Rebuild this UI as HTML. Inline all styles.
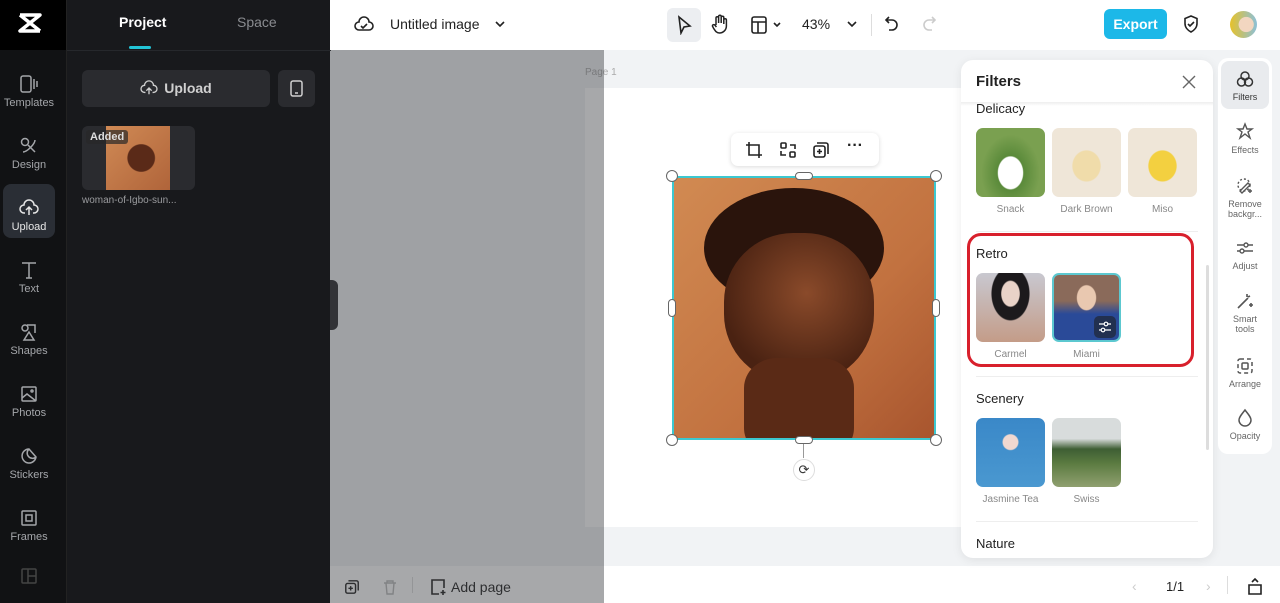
<!DOCTYPE html>
<html><head><meta charset="utf-8"><style>
*{box-sizing:border-box;margin:0;padding:0}
body{width:1280px;height:603px;overflow:hidden;font-family:"Liberation Sans",sans-serif;background:#f1f3f5;position:relative}
.abs{position:absolute}
.rail{left:0;top:0;width:66px;height:603px;background:#111214}
.rail .it{position:absolute;left:0;width:58px;text-align:center;color:#a4a6aa;font-size:11px}
.rail svg{display:block;margin:0 auto 3px}
.panel{left:66px;top:0;width:264px;height:603px;background:#18191c;border-left:1px solid #222}
.top{left:330px;top:0;width:950px;height:50px;background:#fff}
.bot{left:330px;top:566px;width:950px;height:37px;background:#fff}
.cap{text-align:center;font-size:10px;color:#888;margin-top:3px}
.th{position:absolute;width:69px;height:69px;border-radius:7px}
.sb .it{position:absolute;left:0;width:48px;text-align:center;font-size:9px;color:#666;line-height:10px}
.sb svg{display:block;margin:0 auto 3px}
</style></head><body>
<!-- left rail -->
<div class="abs rail">
 <div style="position:absolute;left:0;top:0;width:66px;height:50px;background:#000"></div>
 <svg class="abs" style="left:17px;top:11px" width="26" height="24" viewBox="0 0 26 24"><path d="M3 4h20L3 20h20M3 4l20 16" stroke="#fff" stroke-width="3.5" fill="none" stroke-linejoin="round"/></svg>
 <div class="it" style="top:74px"><svg width="20" height="20" viewBox="0 0 20 20" fill="none" stroke="#a4a6aa" stroke-width="1.5"><rect x="2" y="2" width="10" height="16" rx="2"/><path d="M15 5v10M18 7v6"/></svg>Templates</div>
 <div class="it" style="top:136px"><svg width="20" height="20" viewBox="0 0 20 20" fill="none" stroke="#a4a6aa" stroke-width="1.5"><circle cx="6" cy="6" r="3.5"/><path d="M9 9l7 7M4 16c4 0 12-8 12-12"/></svg>Design</div>
 <div style="position:absolute;left:3px;top:184px;width:52px;height:54px;background:#2a2e35;border-radius:8px"></div>
 <div class="it" style="top:198px;color:#e6e6e6"><svg width="20" height="20" viewBox="0 0 20 20" fill="none" stroke="#e6e6e6" stroke-width="1.5"><path d="M6 15H5a4 4 0 0 1 0-8 5 5 0 0 1 10 0 4 4 0 0 1 0 8h-1M10 17v-7M7 12l3-3 3 3"/></svg>Upload</div>
 <div class="it" style="top:260px"><svg width="20" height="20" viewBox="0 0 20 20" fill="none" stroke="#a4a6aa" stroke-width="1.5"><path d="M3 3h14M10 3v15M7 18h6"/></svg>Text</div>
 <div class="it" style="top:322px"><svg width="20" height="20" viewBox="0 0 20 20" fill="none" stroke="#a4a6aa" stroke-width="1.5"><path d="M8 3h8v8M10 10l-5 8h10z"/><circle cx="6" cy="6" r="3"/></svg>Shapes</div>
 <div class="it" style="top:384px"><svg width="20" height="20" viewBox="0 0 20 20" fill="none" stroke="#a4a6aa" stroke-width="1.5"><rect x="3" y="3" width="14" height="14" rx="1"/><path d="M3 14l5-4 9 7"/><circle cx="13" cy="7" r="1"/></svg>Photos</div>
 <div class="it" style="top:446px"><svg width="20" height="20" viewBox="0 0 20 20" fill="none" stroke="#a4a6aa" stroke-width="1.5"><path d="M17 11a7 7 0 1 1-7-8l7 8zM10 3a5 5 0 0 0 7 8"/></svg>Stickers</div>
 <div class="it" style="top:508px"><svg width="20" height="20" viewBox="0 0 20 20" fill="none" stroke="#a4a6aa" stroke-width="1.5"><rect x="3" y="3" width="14" height="14" rx="1"/><rect x="7" y="7" width="6" height="6"/></svg>Frames</div>
 <div class="it" style="top:566px"><svg width="20" height="20" viewBox="0 0 20 20" fill="none" stroke="#444" stroke-width="1.5"><rect x="3" y="3" width="14" height="14" rx="1"/><path d="M9 3v14M9 10h8"/></svg></div>
</div>
<!-- panel -->
<div class="abs panel">
 <div class="abs" style="left:52px;top:14px;color:#fff;font-weight:bold;font-size:14px">Project</div>
 <div class="abs" style="left:62px;top:46px;width:22px;height:3px;background:#22c4d6;border-radius:2px"></div>
 <div class="abs" style="left:170px;top:14px;color:#8a8c90;font-size:14px">Space</div>
 <div class="abs" style="left:0;top:50px;width:264px;height:1px;background:#26282c"></div>
 <div class="abs" style="left:15px;top:70px;width:188px;height:37px;background:#2a2b2f;border-radius:6px;color:#d0d0d0;font-weight:bold;font-size:14px;line-height:37px;text-align:center">
  <svg width="18" height="16" viewBox="0 0 20 18" style="vertical-align:-3px;margin-right:6px" fill="none" stroke="#d0d0d0" stroke-width="1.5"><path d="M6 14H5a4 4 0 0 1 0-8 5 5 0 0 1 10 0 4 4 0 0 1 0 8h-1M10 16v-6M7 12l3-3 3 3"/></svg>Upload</div>
 <div class="abs" style="left:211px;top:70px;width:37px;height:37px;background:#2a2b2f;border-radius:6px"><svg style="margin:10px 12px" width="13" height="17" viewBox="0 0 13 17" fill="none" stroke="#d0d0d0" stroke-width="1.5"><rect x="1" y="1" width="11" height="15" rx="2"/><path d="M5 13h3"/></svg></div>
 <div class="abs" style="left:15px;top:126px;width:113px;height:64px;background:#2a2b2f;border-radius:6px;overflow:hidden">
  <div class="abs" style="left:24px;top:0;width:64px;height:64px;background:radial-gradient(circle at 55% 50%,#5a2a18 0 28%,transparent 30%),linear-gradient(135deg,#d08a55,#b0643a)"></div>
  <div class="abs" style="left:4px;top:4px;padding:1px 4px;background:rgba(40,40,40,.7);color:#ddd;font-size:11px;font-weight:bold;border-radius:3px">Added</div>
 </div>
 <div class="abs" style="left:15px;top:195px;color:#9a9b9e;font-size:10px">woman-of-Igbo-sun...</div>
 <div class="abs" style="left:263px;top:280px;width:8px;height:50px;background:#2a2b2f;border-radius:0 6px 6px 0"></div>
</div>
<!-- top bar -->
<div class="abs top">
 <svg class="abs" style="left:24px;top:15px" width="20" height="18" viewBox="0 0 20 18" fill="none" stroke="#222" stroke-width="1.6"><path d="M5 15a4 4 0 0 1 0-8 5 5 0 0 1 10 0 4 4 0 0 1 0 8zM7 11l2 2 4-4"/></svg>
 <div class="abs" style="left:60px;top:16px;font-size:14px;color:#222">Untitled image</div>
 <svg class="abs" style="left:165px;top:20px" width="10" height="8" viewBox="0 0 10 8" fill="none" stroke="#222" stroke-width="1.6"><path d="M1 2l4 4 4-4"/></svg>
 <div class="abs" style="left:337px;top:8px;width:34px;height:34px;background:#eceef1;border-radius:6px"></div>
 <svg class="abs" style="left:346px;top:15px" width="16" height="20" viewBox="0 0 16 20" fill="none" stroke="#222" stroke-width="1.6"><path d="M3 2l11 9-6 1-3 6z"/></svg>
 <svg class="abs" style="left:381px;top:14px" width="18" height="20" viewBox="0 0 18 20" fill="none" stroke="#222" stroke-width="1.5"><path d="M5 11V4a1.3 1.3 0 0 1 2.6 0v5M7.6 9V2.5a1.3 1.3 0 0 1 2.6 0V9M10.2 9V3.5a1.3 1.3 0 0 1 2.6 0V10M12.8 10V6a1.3 1.3 0 0 1 2.6 0v6a7 7 0 0 1-7 7c-3 0-4-2-6-5l-1-2c0-1 1-2 2.5-1l1.5 2"/></svg>
 <svg class="abs" style="left:420px;top:15px" width="34" height="20" viewBox="0 0 34 20" fill="none" stroke="#222" stroke-width="1.6"><rect x="2" y="2" width="14" height="16" rx="2"/><path d="M2 7h14M8 7v11M24 8l3 3 3-3"/></svg>
 <div class="abs" style="left:472px;top:16px;font-size:14px;color:#222">43%</div>
 <svg class="abs" style="left:517px;top:20px" width="10" height="8" viewBox="0 0 10 8" fill="none" stroke="#222" stroke-width="1.6"><path d="M1 2l4 4 4-4"/></svg>
 <div class="abs" style="left:541px;top:14px;width:1px;height:22px;background:#ddd"></div>
 <svg class="abs" style="left:554px;top:15px" width="16" height="18" viewBox="0 0 16 18" fill="none" stroke="#222" stroke-width="1.6"><path d="M5 2L2 5l3 3M2 5h6a5 5 0 0 1 0 10H5"/></svg>
 <svg class="abs" style="left:591px;top:15px" width="16" height="18" viewBox="0 0 16 18" fill="none" stroke="#ccc" stroke-width="1.6"><path d="M11 2l3 3-3 3M14 5H8a5 5 0 0 0 0 10h3"/></svg>
 <div class="abs" style="left:774px;top:9px;width:63px;height:30px;background:#1cb8e8;border-radius:6px;color:#fff;font-weight:bold;font-size:14px;line-height:30px;text-align:center">Export</div>
 <svg class="abs" style="left:852px;top:14px" width="18" height="20" viewBox="0 0 18 20" fill="none" stroke="#222" stroke-width="1.6"><path d="M9 2l6 2.5v5c0 4-3 7-6 8.5-3-1.5-6-4.5-6-8.5v-5zM6 10l2 2 4-4"/></svg>
 <div class="abs" style="left:900px;top:11px;width:27px;height:27px;border-radius:50%;background:radial-gradient(circle at 60% 50%,#f2d6c0 0 35%,transparent 37%),linear-gradient(90deg,#e6c12a,#8cc0d8)"></div>
</div>
<!-- canvas -->
<div class="abs" style="left:585px;top:67px;font-size:10px;color:#aaa">Page 1</div>
<div class="abs" style="left:585px;top:88px;width:410px;height:439px;background:#fff"></div>
<div class="abs" style="left:731px;top:133px;width:148px;height:33px;background:#fff;border-radius:7px;box-shadow:0 1px 5px rgba(0,0,0,.15)">
 <svg class="abs" style="left:14px;top:8px" width="18" height="18" viewBox="0 0 18 18" fill="none" stroke="#222" stroke-width="1.6"><path d="M4 1v13h13M1 4h13v13"/></svg>
 <svg class="abs" style="left:48px;top:8px" width="18" height="18" viewBox="0 0 18 18" fill="none" stroke="#222" stroke-width="1.6"><rect x="2" y="2" width="5" height="5" rx="1"/><rect x="11" y="11" width="5" height="5" rx="1"/><path d="M11 4h5v4M7 14H2v-4"/></svg>
 <svg class="abs" style="left:81px;top:8px" width="18" height="18" viewBox="0 0 18 18" fill="none" stroke="#222" stroke-width="1.6"><rect x="2" y="5" width="11" height="11" rx="2"/><path d="M5 2h9a2 2 0 0 1 2 2v9M7.5 8v5M5 10.5h5"/></svg>
 <div class="abs" style="left:116px;top:4px;font-size:16px;font-weight:bold;color:#222">···</div>
</div>
<div class="abs" style="left:672px;top:176px;width:264px;height:264px;border:2px solid #3cc8d0;overflow:hidden;background:linear-gradient(135deg,#d18a52,#c27240 60%,#a8552e)">
 <div class="abs" style="left:30px;top:10px;width:180px;height:120px;border-radius:50%;background:#2a140c"></div>
 <div class="abs" style="left:50px;top:55px;width:150px;height:150px;border-radius:46%;background:radial-gradient(circle at 55% 40%,#8a4a2a,#4a2212 70%)"></div>
 <div class="abs" style="left:70px;top:180px;width:110px;height:100px;background:#5a2a16;border-radius:30%"></div>
</div>
<div class="abs" style="left:666px;top:170px;width:12px;height:12px;border-radius:50%;background:#fff;border:1px solid #666"></div>
<div class="abs" style="left:930px;top:170px;width:12px;height:12px;border-radius:50%;background:#fff;border:1px solid #666"></div>
<div class="abs" style="left:666px;top:434px;width:12px;height:12px;border-radius:50%;background:#fff;border:1px solid #666"></div>
<div class="abs" style="left:930px;top:434px;width:12px;height:12px;border-radius:50%;background:#fff;border:1px solid #666"></div>
<div class="abs" style="left:795px;top:172px;width:18px;height:8px;border-radius:4px;background:#fff;border:1px solid #666"></div>
<div class="abs" style="left:795px;top:436px;width:18px;height:8px;border-radius:4px;background:#fff;border:1px solid #666"></div>
<div class="abs" style="left:668px;top:299px;width:8px;height:18px;border-radius:4px;background:#fff;border:1px solid #666"></div>
<div class="abs" style="left:932px;top:299px;width:8px;height:18px;border-radius:4px;background:#fff;border:1px solid #666"></div>
<div class="abs" style="left:803px;top:444px;width:1px;height:14px;background:#999"></div>
<div class="abs" style="left:793px;top:459px;width:22px;height:22px;border-radius:50%;background:#fff;border:1px solid #ddd;text-align:center;font-size:13px;line-height:20px;color:#333">⟳</div>
<!-- bottom -->
<div class="abs bot">
 <svg class="abs" style="left:14px;top:13px" width="16" height="16" viewBox="0 0 18 18" fill="none" stroke="#222" stroke-width="1.6"><rect x="2" y="5" width="11" height="11" rx="2"/><path d="M5 2h9a2 2 0 0 1 2 2v9M7.5 8v5M5 10.5h5"/></svg>
 <svg class="abs" style="left:52px;top:13px" width="16" height="16" viewBox="0 0 16 16" fill="none" stroke="#bbb" stroke-width="1.4"><path d="M2 4h12M5 4V2h6v2M4 4l1 11h6l1-11"/></svg>
 <div class="abs" style="left:82px;top:11px;width:1px;height:16px;background:#ddd"></div>
 <svg class="abs" style="left:99px;top:12px" width="18" height="18" viewBox="0 0 18 18" fill="none" stroke="#222" stroke-width="1.6"><path d="M10 16H3V2h12v8M14 12v5M11.5 14.5h5"/></svg>
 <div class="abs" style="left:121px;top:13px;font-size:14px;color:#222">Add page</div>
 <div class="abs" style="left:802px;top:12px;font-size:14px;color:#ccc">‹</div>
 <div class="abs" style="left:836px;top:13px;font-size:13px;color:#222">1/1</div>
 <div class="abs" style="left:876px;top:12px;font-size:14px;color:#ccc">›</div>
 <div class="abs" style="left:897px;top:10px;width:1px;height:18px;background:#ddd"></div>
 <svg class="abs" style="left:917px;top:11px" width="16" height="18" viewBox="0 0 16 18" fill="none" stroke="#222" stroke-width="1.6"><path d="M2 8h12v9H2zM5 5l3-3 3 3"/></svg>
</div>
<!-- overlay -->
<div class="abs" style="left:330px;top:50px;width:274px;height:553px;background:rgba(60,62,66,.45)"></div>
<!-- filters panel -->
<div class="abs" style="left:961px;top:60px;width:252px;height:498px;background:#fff;border-radius:12px;box-shadow:0 2px 10px rgba(0,0,0,.08);overflow:hidden">
 <div class="abs" style="left:15px;top:13px;font-weight:bold;font-size:15px;color:#222">Filters</div>
 <svg class="abs" style="left:221px;top:15px" width="14" height="14" viewBox="0 0 14 14" stroke="#666" stroke-width="1.4"><path d="M1 1l12 12M13 1L1 13"/></svg>
 <div class="abs" style="left:0;top:42px;width:252px;height:4px;background:linear-gradient(#eee,#fff)"></div>
 <div class="abs" style="left:15px;top:41px;font-size:13px;color:#222">Delicacy</div>
 <div class="th" style="left:15px;top:68px;background:radial-gradient(ellipse at 50% 65%,#fff 0 25%,#5a8a3a 27%,#7aa050 60%),linear-gradient(#eee,#ddd)"></div>
 <div class="th" style="left:91px;top:68px;background:radial-gradient(ellipse at 50% 55%,#f0dcaa 0 28%,#efe6d8 30%),#e8ddd0"></div>
 <div class="th" style="left:167px;top:68px;background:radial-gradient(ellipse at 50% 55%,#f3d040 0 28%,#efe6d8 30%),#e9dccb"></div>
 <div class="abs cap" style="left:15px;top:141px;width:69px">Snack</div>
 <div class="abs cap" style="left:91px;top:141px;width:69px">Dark Brown</div>
 <div class="abs cap" style="left:167px;top:141px;width:69px">Miso</div>
 <div class="abs" style="left:15px;top:171px;width:222px;height:1px;background:#eee"></div>
 <div class="abs" style="left:15px;top:186px;font-size:13px;color:#222">Retro</div>
 <div class="th" style="left:15px;top:213px;background:radial-gradient(ellipse at 50% 30%,#e9d3c8 0 18%,#1c1a1c 20% 38%,transparent 40%),linear-gradient(#c8c8d0,#c49c88)"></div>
 <div class="th" style="left:91px;top:213px;border:2px solid #5cc8d0;background:radial-gradient(ellipse at 50% 35%,#e9c8b0 0 20%,transparent 22%),linear-gradient(#8a6a5a 40%,#2a4a98 60%)"></div>
 <div class="abs" style="left:133px;top:256px;width:22px;height:22px;border-radius:5px;background:#223050"></div>
 <svg class="abs" style="left:137px;top:260px" width="14" height="14" viewBox="0 0 14 14" fill="none" stroke="#fff" stroke-width="1.2"><path d="M1 4h12M1 10h12"/><circle cx="8" cy="4" r="1.8" fill="#223050"/><circle cx="5" cy="10" r="1.8" fill="#223050"/></svg>
 <div class="abs cap" style="left:15px;top:286px;width:69px">Carmel</div>
 <div class="abs cap" style="left:91px;top:286px;width:69px">Miami</div>
 <div class="abs" style="left:15px;top:316px;width:222px;height:1px;background:#eee"></div>
 <div class="abs" style="left:15px;top:331px;font-size:13px;color:#222">Scenery</div>
 <div class="th" style="left:15px;top:358px;background:radial-gradient(circle at 50% 35%,#f0d8d0 0 13%,transparent 15%),linear-gradient(#3a88c8,#4a98d0)"></div>
 <div class="th" style="left:91px;top:358px;background:linear-gradient(#d8dcdc 30%,#3e5e34 45%,#5a7a40 65%,#90a070)"></div>
 <div class="abs cap" style="left:15px;top:431px;width:69px">Jasmine Tea</div>
 <div class="abs cap" style="left:91px;top:431px;width:69px">Swiss</div>
 <div class="abs" style="left:15px;top:461px;width:222px;height:1px;background:#eee"></div>
 <div class="abs" style="left:15px;top:476px;font-size:13px;color:#222">Nature</div>
 <div class="abs" style="left:245px;top:205px;width:3px;height:185px;background:#ddd;border-radius:2px"></div>
 <div class="abs" style="left:6px;top:173px;width:227px;height:134px;border:3px solid #d8202c;border-radius:14px"></div>
</div>
<!-- right sidebar -->
<div class="abs sb" style="left:1218px;top:58px;width:54px;height:396px;background:#fff;border-radius:10px">
 <div class="abs" style="left:3px;top:3px;width:48px;height:48px;background:#e9ebee;border-radius:8px"></div>
 <div class="it" style="left:3px;top:11px;color:#333"><svg width="20" height="20" viewBox="0 0 20 20" fill="none" stroke="#333" stroke-width="1.5"><circle cx="10" cy="7" r="4"/><circle cx="6.5" cy="13" r="4"/><circle cx="13.5" cy="13" r="4"/></svg>Filters</div>
 <div class="it" style="left:3px;top:64px"><svg width="20" height="20" viewBox="0 0 20 20" fill="none" stroke="#555" stroke-width="1.4"><path d="M10 2l2 5h5l-4 3 2 6-5-4-5 4 2-6-4-3h5z"/></svg>Effects</div>
 <div class="it" style="left:3px;top:118px"><svg width="20" height="20" viewBox="0 0 20 20" fill="none" stroke="#555" stroke-width="1.4"><path d="M5 15l8-8 2 2-8 8zM15 13v4M13 15h4" /><circle cx="9" cy="9" r="6" stroke-dasharray="2 2"/></svg>Remove<br>backgr...</div>
 <div class="it" style="left:3px;top:180px"><svg width="20" height="20" viewBox="0 0 20 20" fill="none" stroke="#555" stroke-width="1.4"><path d="M2 7h16M2 13h16"/><circle cx="11" cy="7" r="2" fill="#fff"/><circle cx="7" cy="13" r="2" fill="#fff"/></svg>Adjust</div>
 <div class="it" style="left:3px;top:233px"><svg width="20" height="20" viewBox="0 0 20 20" fill="none" stroke="#555" stroke-width="1.6"><path d="M3 17l10-10M12 3v3M15 5l-2 1M16 12v4M14 14h4"/></svg>Smart<br>tools</div>
 <div class="it" style="left:3px;top:298px"><svg width="20" height="20" viewBox="0 0 20 20" fill="none" stroke="#555" stroke-width="1.5"><rect x="3" y="3" width="14" height="14" rx="2" stroke-dasharray="4 3"/><rect x="7" y="7" width="6" height="6" rx="1"/></svg>Arrange</div>
 <div class="it" style="left:3px;top:350px"><svg width="20" height="20" viewBox="0 0 20 20" fill="none" stroke="#555" stroke-width="1.5"><path d="M10 2c3 4 6 7 6 10a6 6 0 0 1-12 0c0-3 3-6 6-10z"/></svg>Opacity</div>
</div>
</body></html>
